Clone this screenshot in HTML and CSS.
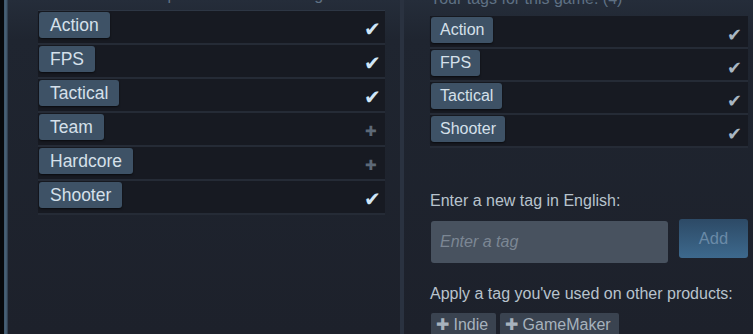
FILE: index.html
```html
<!DOCTYPE html>
<html>
<head>
<meta charset="utf-8">
<link rel="stylesheet" href="styles.css">
</head>
<body>
<div class="page">
  <div class="edge"></div>
  <section class="panel left">
    <div class="head"><span>Popular user-defined tags for this product:</span></div>
    <ul class="rows">
      <li class="row"><span class="tag">Action</span><span class="mark check">&#10004;</span></li>
      <li class="row"><span class="tag">FPS</span><span class="mark check">&#10004;</span></li>
      <li class="row"><span class="tag">Tactical</span><span class="mark check">&#10004;</span></li>
      <li class="row"><span class="tag">Team</span><span class="mark plus">&#10010;</span></li>
      <li class="row"><span class="tag">Hardcore</span><span class="mark plus">&#10010;</span></li>
      <li class="row"><span class="tag">Shooter</span><span class="mark check">&#10004;</span></li>
    </ul>
  </section>
  <div class="divider"></div>
  <section class="panel right">
    <div class="head"><span>Your tags for this game: (4)</span></div>
    <ul class="rows">
      <li class="row"><span class="tag">Action</span><span class="mark check dim">&#10004;</span></li>
      <li class="row"><span class="tag">FPS</span><span class="mark check dim">&#10004;</span></li>
      <li class="row"><span class="tag">Tactical</span><span class="mark check dim">&#10004;</span></li>
      <li class="row"><span class="tag">Shooter</span><span class="mark check dim">&#10004;</span></li>
    </ul>
    <p class="label first">Enter a new tag in English:</p>
    <div class="entry">
      <input class="input" type="text" placeholder="Enter a tag">
      <button class="add">Add</button>
    </div>
    <p class="label">Apply a tag you've used on other products:</p>
    <div class="used">
      <span class="chip">&#10010; Indie</span>
      <span class="chip">&#10010; GameMaker</span>
    </div>
  </section>
</div>
</body>
</html>
```

FILE: styles.css
```css
* { box-sizing: border-box; }
html, body { margin: 0; padding: 0; }
body {
  width: 753px;
  height: 334px;
  overflow: hidden;
  background: #1c212c;
  font-family: "Liberation Sans", Arial, sans-serif;
  color: #c6d4df;
}
.page {
  display: flex;
  height: 334px;
}
.edge {
  width: 8px;
  flex: none;
  background: linear-gradient(to right, #07090c 0, #07090c 4px, #3e566c 4px, #4a6479 6px, #2a3646 8px);
}
.panel {
  height: 334px;
  background: linear-gradient(to bottom, #252d3a 0, #1f2530 40px, #1d212b 334px);
}
.left {
  width: 392px;
  flex: none;
  padding: 0 15px 0 30px;
}
.divider {
  width: 4px;
  flex: none;
  background: #2a3240;
}
.right {
  flex: 1;
  padding: 0 8px 0 26px;
}
.head {
  height: 11px;
  overflow: hidden;
  font-size: 16px;
  line-height: 20px;
  color: #5f7184;
  border-bottom: 1px solid #2d3644;
}
.head span { display: block; margin-top: -15px; padding-left: 110px; white-space: nowrap; }
.right .head { height: 16px; border-bottom: none; }
.right .head span { margin-top: -11px; padding-left: 0; }
.rows {
  list-style: none;
  margin: 0;
  padding: 0;
}
.row {
  display: flex;
  align-items: flex-start;
  justify-content: space-between;
  height: 34px;
  padding: 1px 4px 0 1px;
  background: #171a22;
  border-bottom: 2px solid #252b36;
}
.right .row { height: 33px; padding-top: 1px; padding-right: 6px; }
.tag {
  display: inline-block;
  height: 26px;
  padding: 0 11px;
  background: #3e5266;
  border-radius: 3px;
  box-shadow: 0 1px 2px rgba(0,0,0,0.6);
  font-size: 17.5px;
  line-height: 26px;
  color: #d5e0ea;
}
.right .tag { font-size: 16px; padding: 0 9px; }
.mark {
  font-size: 20px;
  line-height: 20px;
  margin-top: 7px;
  color: #d0e6f7;
}
.mark.plus { color: #5d6977; font-size: 14px; margin-top: 7px; margin-right: 4px; }
.mark.dim { color: #a9b6c2; font-size: 18px; margin-top: 8px; }
.label {
  margin: 0;
  font-size: 16px;
  color: #b8c3cd;
}
.label.first { margin-top: 44px; }
.entry {
  display: flex;
  gap: 11px;
  margin: 9px 0 22px 1px;
}
.input {
  width: 237px;
  height: 42px;
  border: none;
  border-radius: 3px;
  background: #48525f;
  padding: 0 9px;
  font-family: "Liberation Sans", Arial, sans-serif;
  font-size: 16px;
  font-style: italic;
  color: #c6d4df;
  outline: none;
  margin-top: 2px;
}
.input::placeholder { color: #7c8794; }
.add {
  width: 69px;
  height: 39px;
  border: none;
  border-radius: 3px;
  background: linear-gradient(to bottom, #2d4a66, #3d698d);
  color: #6a8aa7;
  font-family: "Liberation Sans", Arial, sans-serif;
  font-size: 16.5px;
}
.used {
  display: flex;
  gap: 4px;
  margin-top: 10px;
  margin-left: 1px;
}
.chip {
  display: inline-block;
  height: 26px;
  padding: 0 8px 0 5px;
  background: #3a4350;
  border-radius: 2px;
  font-size: 16px;
  line-height: 24px;
  color: #a7b2bd;
}
```
